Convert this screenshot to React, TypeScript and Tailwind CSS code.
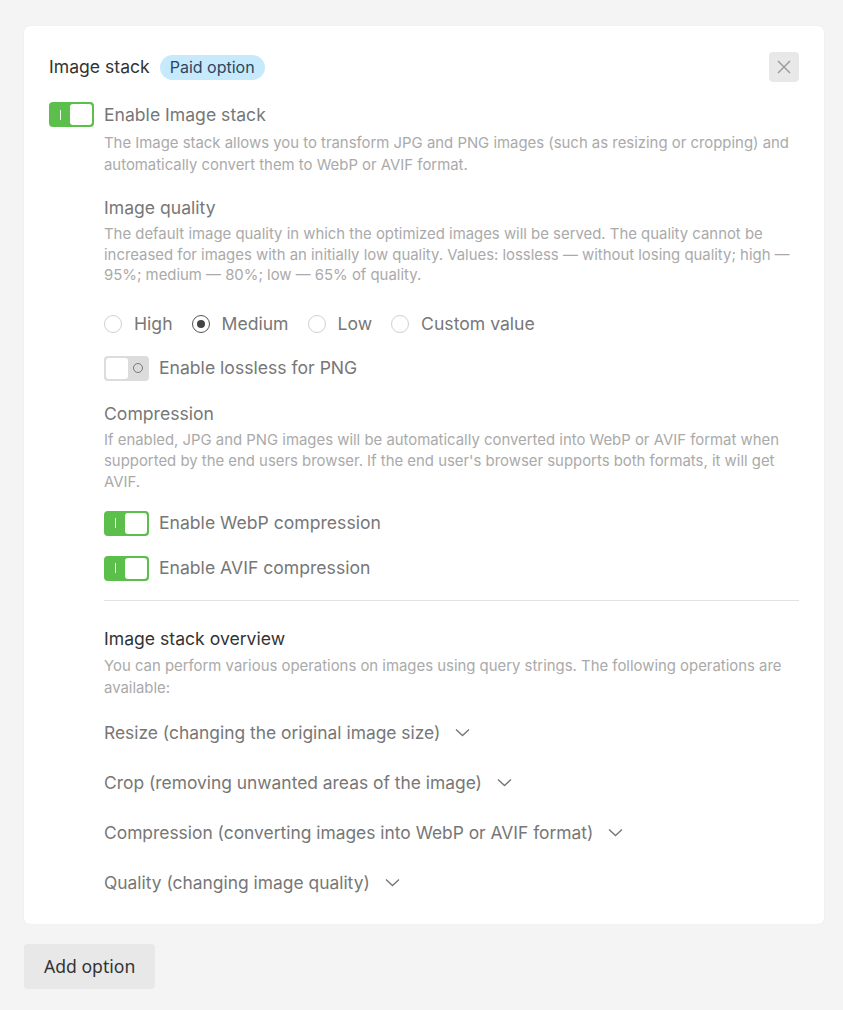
import React, { useState } from "react";

const font = { fontFamily: "Inter, 'Noto Sans', sans-serif" };

function Toggle({ on, onChange }: { on: boolean; onChange: () => void }) {
  return (
    <button
      type="button"
      onClick={onChange}
      className={`flex h-[25px] w-[45px] shrink-0 items-center rounded-[4px] p-[2px] ${
        on ? "bg-[#5cbf4c]" : "bg-[#dcdcdc]"
      }`}
    >
      {on ? (
        <>
          <span className="flex flex-1 justify-center">
            <span className="h-[10px] w-[1.5px] bg-white/90"></span>
          </span>
          <span className="h-[21px] w-[22px] rounded-[3px] bg-white"></span>
        </>
      ) : (
        <>
          <span className="h-[21px] w-[22px] rounded-[3px] bg-white"></span>
          <span className="flex flex-1 justify-center">
            <span className="h-[10px] w-[10px] rounded-full border border-[#777]"></span>
          </span>
        </>
      )}
    </button>
  );
}

function ToggleRow({
  label,
  on,
  onChange,
}: {
  label: string;
  on: boolean;
  onChange: () => void;
}) {
  return (
    <div className="flex items-center gap-[10px]">
      <Toggle on={on} onChange={onChange} />
      <span className="text-[17.6px] leading-[24px] text-[#777]">{label}</span>
    </div>
  );
}

function Radio({
  label,
  checked,
  onSelect,
}: {
  label: string;
  checked: boolean;
  onSelect: () => void;
}) {
  return (
    <label className="flex cursor-pointer items-center gap-[12px]" onClick={onSelect}>
      <span
        className={`flex h-[18px] w-[18px] items-center justify-center rounded-full border ${
          checked ? "border-[#555]" : "border-[#d0d0d0]"
        }`}
      >
        {checked && <span className="h-[8px] w-[8px] rounded-full bg-[#444]"></span>}
      </span>
      <span className="text-[17.6px] leading-[24px] text-[#777]">{label}</span>
    </label>
  );
}

function Chevron() {
  return (
    <svg width="15" height="9" viewBox="0 0 15 9" fill="none">
      <path d="M1 1.5 L7.5 7.5 L14 1.5" stroke="#777" strokeWidth="1.4" />
    </svg>
  );
}

const operations = [
  "Resize (changing the original image size)",
  "Crop (removing unwanted areas of the image)",
  "Compression (converting images into WebP or AVIF format)",
  "Quality (changing image quality)",
];

export default function App() {
  const [stack, setStack] = useState(true);
  const [quality, setQuality] = useState("Medium");
  const [lossless, setLossless] = useState(false);
  const [webp, setWebp] = useState(true);
  const [avif, setAvif] = useState(true);

  return (
    <div className="min-h-screen bg-[#f4f4f4] px-[24px] pt-[26px] pb-[20px]" style={font}>
      <div className="w-[800px] rounded-[6px] bg-white px-[25px] pt-[26px] pb-[29px] shadow-[0_0_2px_rgba(0,0,0,0.06)]">
        <div className="flex items-center justify-between">
          <div className="flex items-center gap-[10px]">
            <h2 className="text-[17.6px] leading-[24px] text-[#333]">Image stack</h2>
            <span className="rounded-full bg-[#c6eafc] px-[10px] text-[16px] leading-[25px] text-[#2b4662]">
              Paid option
            </span>
          </div>
          <button
            type="button"
            className="flex h-[30px] w-[30px] items-center justify-center rounded-[4px] bg-[#e8e8e8]"
          >
            <svg width="14" height="14" viewBox="0 0 14 14" fill="none">
              <path d="M1 1 L13 13 M13 1 L1 13" stroke="#999" strokeWidth="1.4" />
            </svg>
          </button>
        </div>

        <div className="mt-[20px]">
          <ToggleRow label="Enable Image stack" on={stack} onChange={() => setStack(!stack)} />
        </div>

        <div className="ml-[55px]">
          <p className="mt-[5px] text-[14.9px] leading-[22px] text-[#aaa]">
            The Image stack allows you to transform JPG and PNG images (such as resizing or
            cropping) and automatically convert them to WebP or AVIF format.
          </p>

          <h3 className="mt-[20px] text-[17.6px] leading-[24px] text-[#777]">Image quality</h3>
          <p className="mt-[4px] text-[14.9px] leading-[20.5px] text-[#aaa]">
            The default image quality in which the optimized images will be served. The quality
            cannot be increased for images with an initially low quality. Values: lossless —
            without losing quality; high — 95%; medium — 80%; low — 65% of quality.
          </p>

          <div className="mt-[26px] flex items-center gap-[19px]">
            {["High", "Medium", "Low", "Custom value"].map((q) => (
              <Radio key={q} label={q} checked={quality === q} onSelect={() => setQuality(q)} />
            ))}
          </div>

          <div className="mt-[20px]">
            <ToggleRow
              label="Enable lossless for PNG"
              on={lossless}
              onChange={() => setLossless(!lossless)}
            />
          </div>

          <h3 className="mt-[21px] text-[17.6px] leading-[24px] text-[#777]">Compression</h3>
          <p className="mt-[4px] text-[14.9px] leading-[21px] text-[#aaa]">
            If enabled, JPG and PNG images will be automatically converted into WebP or AVIF format
            when supported by the end users browser. If the end user's browser supports both
            formats, it will get AVIF.
          </p>

          <div className="mt-[18px] flex flex-col gap-[20px]">
            <ToggleRow label="Enable WebP compression" on={webp} onChange={() => setWebp(!webp)} />
            <ToggleRow label="Enable AVIF compression" on={avif} onChange={() => setAvif(!avif)} />
          </div>

          <div className="mt-[19px] border-t border-[#e2e2e2]"></div>

          <h3 className="mt-[26px] text-[17.6px] leading-[24px] text-[#333]">
            Image stack overview
          </h3>
          <p className="mt-[4px] text-[14.9px] leading-[22px] text-[#aaa]">
            You can perform various operations on images using query strings. The following
            operations are available:
          </p>

          <div className="mt-[22px] flex flex-col gap-[26px]">
            {operations.map((op) => (
              <button key={op} type="button" className="flex items-center gap-[15px] text-left">
                <span className="text-[17.4px] leading-[24px] text-[#777]">{op}</span>
                <Chevron />
              </button>
            ))}
          </div>
        </div>
      </div>

      <button
        type="button"
        className="mt-[20px] h-[45px] rounded-[4px] bg-[#e8e8e8] px-[20px] text-[17.6px] text-[#333]"
        style={{ fontFamily: "'Noto Sans', 'Open Sans', sans-serif" }}
      >
        Add option
      </button>
    </div>
  );
}
